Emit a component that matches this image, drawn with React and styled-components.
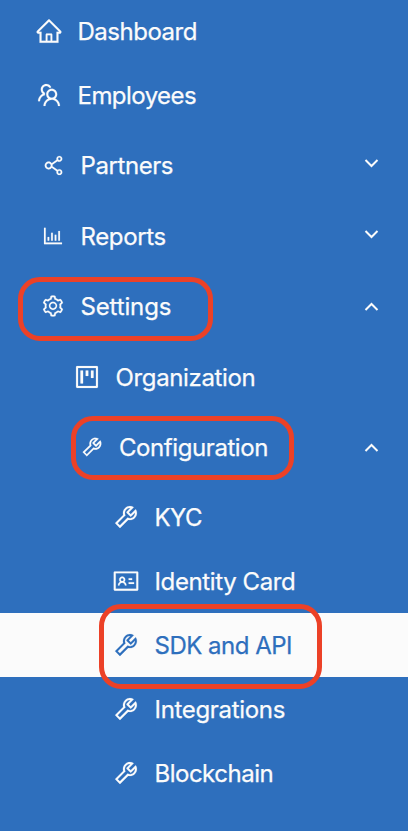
import React from 'react';
import styled, { createGlobalStyle } from 'styled-components';
import {
  AiOutlineHome, AiOutlineTeam, AiOutlineShareAlt, AiOutlineBarChart, AiOutlineSetting,
  AiOutlineProject, AiOutlineTool, AiOutlineIdcard,
} from 'react-icons/ai';

const GlobalStyle = createGlobalStyle`
  body { margin: 0; background: #2e6fbd; }
  * { box-sizing: border-box; }
`;

const Sidebar = styled.nav`
  width: 408px;
  height: 831px;
  overflow: hidden;
  background: #2e6fbd;
  font-family: Inter, sans-serif;
  font-size: 24px;
  line-height: 32px;
`;

const Menu = styled.ul`
  list-style: none;
  margin: 0;
  padding: 0 0 ${p => p.$end || 0}px;
`;

const Item = styled.li`
  position: relative;
  display: flex;
  align-items: center;
  height: ${p => p.$height}px;
  padding-left: ${p => p.$indent}px;
  padding-right: 29.5px;
  color: ${p => (p.$active ? '#2e6fbd' : '#fbfbfb')};
  background: ${p => (p.$active ? '#fbfbfb' : 'transparent')};
`;

const Glyph = styled.span`
  display: flex;
  flex: none;
  margin-right: ${p => p.$gap}px;
  padding-bottom: ${p => p.$lift}px;
  svg {
    width: ${p => p.$size}px;
    height: ${p => p.$size}px;
    stroke: currentColor;
    stroke-width: ${p => p.$bold}px;
  }
`;

const Label = styled.span`
  flex: 1;
  padding-top: ${p => p.$drop || 0}px;
  white-space: nowrap;
  letter-spacing: ${p => p.$tracking}px;
  -webkit-text-stroke: 0.25px currentColor;
`;

const Arrow = styled.svg`
  flex: none;
  width: 15px;
  height: 10px;
  margin-top: ${p => (p.$up ? 0 : -6)}px;
  transform: ${p => (p.$up ? 'rotate(180deg)' : 'none')};
  fill: none;
  stroke: currentColor;
  stroke-width: 2;
`;

const Highlight = styled.span`
  position: absolute;
  z-index: 1;
  left: ${p => p.$left}px;
  top: ${p => p.$top}px;
  width: ${p => p.$width}px;
  height: ${p => p.$height}px;
  border: 5px solid #ec4127;
  border-radius: 22px;
`;

const top = [
  { label: 'Dashboard', icon: AiOutlineHome, tracking: -0.48 },
  { label: 'Employees', icon: AiOutlineTeam, tracking: -0.55 },
].map(row => ({ indent: 35, size: 28, gap: 14.5, height: 64, lift: 2, ...row }));

const groups = [
  { label: 'Partners', icon: AiOutlineShareAlt, size: 25, gap: 14.5, arrow: 'down', tracking: -0.42 },
  { label: 'Reports', icon: AiOutlineBarChart, arrow: 'down', tracking: -0.37 },
  { label: 'Settings', icon: AiOutlineSetting, arrow: 'up', tracking: -0.14, mark: [18, 5, 195, 64] },
  { label: 'Organization', icon: AiOutlineProject, indent: 72.5, size: 28, gap: 15, tracking: -0.35 },
  { label: 'Configuration', icon: AiOutlineTool, indent: 80, gap: 15, arrow: 'up', tracking: -0.42, mark: [71, 3, 223, 64] },
].map(row => ({ indent: 41, size: 24, gap: 15.5, lift: 2, ...row }));

const pages = [
  { label: 'KYC', icon: AiOutlineTool, tracking: -0.6 },
  { label: 'Identity Card', icon: AiOutlineIdcard, tracking: -0.38 },
  { label: 'SDK and API', icon: AiOutlineTool, tracking: -0.5, active: true, mark: [99, -9, 223, 85] },
  { label: 'Integrations', icon: AiOutlineTool, tracking: -0.32 },
  { label: 'Blockchain', icon: AiOutlineTool, tracking: -0.5 },
].map(row => ({ indent: 111.5, size: 28, gap: 15, height: 64, drop: 2, ...row }));

function Row({ label, icon: Icon, indent, size, gap, height = 70.5, lift = 0, drop, bold = 6, arrow, active, mark, tracking }) {
  return (
    <Item $height={height} $indent={indent} $active={active}>
      <Glyph $size={size} $gap={gap} $bold={bold} $lift={lift}><Icon /></Glyph>
      <Label $tracking={tracking} $drop={drop}>{label}</Label>
      {arrow && (
        <Arrow $up={arrow === 'up'} viewBox="0 0 15 10"><path d="M1.5 2 7.5 8l6-6" /></Arrow>
      )}
      {mark && <Highlight $left={mark[0]} $top={mark[1]} $width={mark[2]} $height={mark[3]} />}
    </Item>
  );
}

export default function App() {
  return (
    <>
      <GlobalStyle />
      <Sidebar>
        <Menu $end={3}>{top.map(row => <Row key={row.label} {...row} />)}</Menu>
        <Menu $end={1.5}>{groups.map(row => <Row key={row.label} {...row} />)}</Menu>
        <Menu>{pages.map(row => <Row key={row.label} {...row} />)}</Menu>
      </Sidebar>
    </>
  );
}
